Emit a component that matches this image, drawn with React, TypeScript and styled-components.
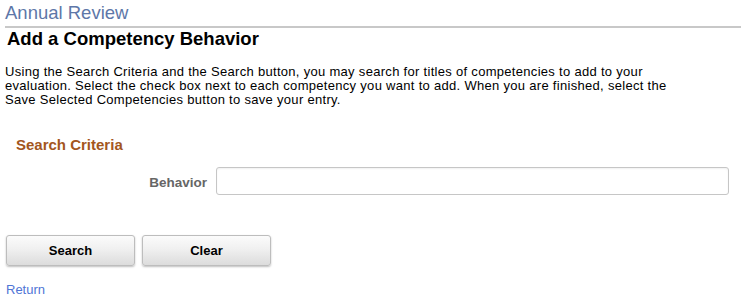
import React, { useState } from 'react'
import styled, { createGlobalStyle } from 'styled-components'

const GlobalStyle = createGlobalStyle`
  html, body {
    margin: 0;
    padding: 0;
    background: #fff;
  }
  body {
    font-family: Arial, "Liberation Sans", Helvetica, sans-serif;
    color: #000;
  }
`

const Page = styled.div`
  width: 741px;
  height: 305px;
  overflow: hidden;
  display: flex;
  flex-direction: column;
`

const Banner = styled.div`
  margin-left: 5px;
  padding-top: 3px;
  height: 28px;
  box-sizing: border-box;
  border-bottom: 2px solid #c8c8c8;
`

const BannerTitle = styled.div`
  font-size: 18.5px;
  line-height: 20px;
  color: #5e77a8;
`

const PageTitle = styled.h1`
  margin: 0 0 0 7px;
  font-size: 18.5px;
  line-height: 22px;
  font-weight: bold;
  color: #000;
`

const Instructions = styled.p`
  margin: 14.5px 0 0 5px;
  width: 690px;
  font-size: 13px;
  line-height: 14.3px;
  letter-spacing: 0.3px;
  color: #000;
`

const GroupTitle = styled.h2`
  margin: 28.5px 0 0 16px;
  font-size: 15px;
  line-height: 17px;
  font-weight: bold;
  color: #a3561d;
`

const FieldRow = styled.div`
  display: flex;
  align-items: center;
  margin-top: 14px;
`

const FieldLabel = styled.label`
  width: 207px;
  padding-top: 4px;
  text-align: right;
  font-size: 13.5px;
  font-weight: bold;
  color: #666;
`

const TextInput = styled.input`
  margin-left: 9px;
  width: 513px;
  height: 28px;
  box-sizing: border-box;
  border: 1px solid #c6c6c6;
  border-radius: 3px;
  box-shadow: inset 0 1px 2px rgba(0, 0, 0, 0.06);
  font-family: inherit;
  font-size: 13px;
  padding: 0 6px;
  outline: none;
`

const ButtonBar = styled.div`
  display: flex;
  gap: 7px;
  margin: 40px 0 0 6px;
`

const PushButton = styled.button`
  width: 129px;
  height: 31px;
  box-sizing: border-box;
  border: 1px solid #bdbdbd;
  border-radius: 3px;
  background: linear-gradient(to bottom, #fbfbfb 0%, #f0f0f0 45%, #dcdcdc 100%);
  box-shadow: 0 1px 2px rgba(0, 0, 0, 0.25);
  font-family: Arial, "Liberation Sans", sans-serif;
  font-size: 13px;
  font-weight: bold;
  color: #000;
  cursor: pointer;
`

const Footer = styled.div`
  margin: 15px 0 0 6px;
  line-height: 15px;
`

const ReturnLink = styled.a`
  font-size: 13px;
  color: #4f75d6;
  text-decoration: none;
  cursor: pointer;
`

export default function App() {
  const [behavior, setBehavior] = useState('')

  return (
    <>
      <GlobalStyle />
      <Page>
        <Banner>
          <BannerTitle>Annual Review</BannerTitle>
        </Banner>
        <PageTitle>Add a Competency Behavior</PageTitle>
        <Instructions>
          Using the Search Criteria and the Search button, you may search for titles of competencies to add to your
          evaluation. Select the check box next to each competency you want to add. When you are finished, select the
          Save Selected Competencies button to save your entry.
        </Instructions>
        <GroupTitle>Search Criteria</GroupTitle>
        <FieldRow>
          <FieldLabel htmlFor="behavior">Behavior</FieldLabel>
          <TextInput id="behavior" value={behavior} onChange={e => setBehavior(e.target.value)} />
        </FieldRow>
        <ButtonBar>
          <PushButton>Search</PushButton>
          <PushButton onClick={() => setBehavior('')}>Clear</PushButton>
        </ButtonBar>
        <Footer>
          <ReturnLink>Return</ReturnLink>
        </Footer>
      </Page>
    </>
  )
}
